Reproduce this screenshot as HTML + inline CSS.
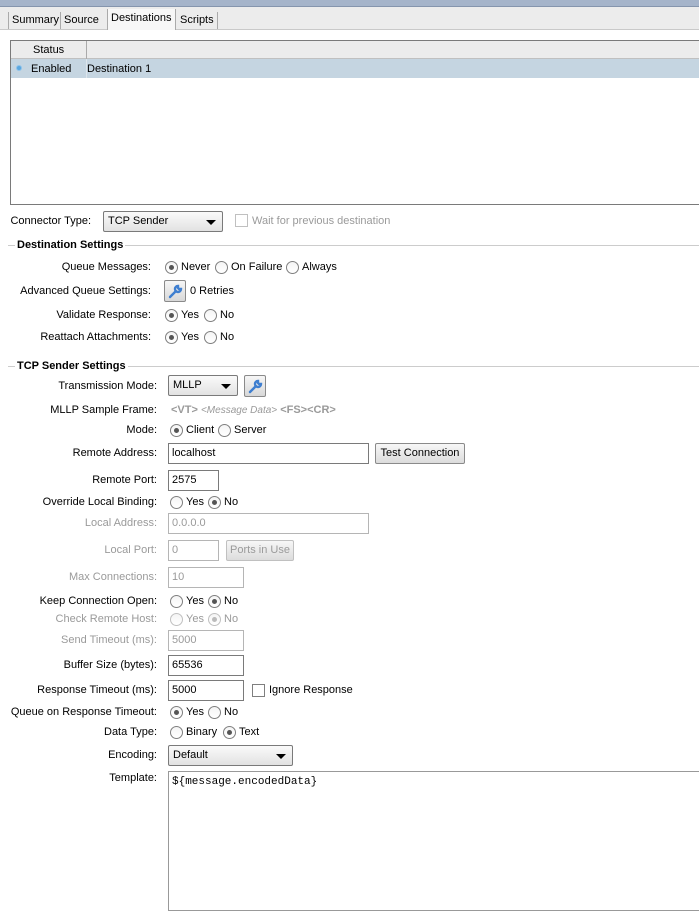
<!DOCTYPE html>
<html><head><meta charset="utf-8"><style>
*{box-sizing:border-box;margin:0;padding:0}
body{width:699px;height:906px;background:#fff;font-family:"Liberation Sans",sans-serif;font-size:11px;color:#000;position:relative;overflow:hidden;line-height:17px}
.a{position:absolute;white-space:nowrap}
.l{position:absolute;text-align:right;white-space:nowrap;line-height:17px}
.g{color:#9a9a9a}
.in{position:absolute;height:21px;border:1px solid #7a7a7a;background:#fff;padding:3px 3px;line-height:13px}
.in.d{border-color:#b5b5b5;color:#9a9a9a}
.r{position:absolute;width:13px;height:13px;border:1px solid #7f7f7f;border-radius:50%;background:linear-gradient(#f4f4f4,#fff)}
.r.on::after{content:"";position:absolute;left:3px;top:3px;width:5px;height:5px;border-radius:50%;background:#555}
.r.dis{border-color:#c0c0c0}.r.dis.on::after{background:#bbb}
.btn{position:absolute;border:1px solid #8a8a8a;border-radius:2px;background:linear-gradient(#f7f7f7,#dcdcdc);text-align:center;line-height:18px}
.sel{position:absolute;height:21px;border:1px solid #7a7a7a;border-radius:2px;background:linear-gradient(#fafafa,#e2e2e2);padding:2px 4px;line-height:15px}
.sel::after{content:"";position:absolute;right:6px;top:8px;border-left:5px solid transparent;border-right:5px solid transparent;border-top:5px solid #000}
.hd{position:absolute;font-weight:bold;white-space:nowrap;background:#fff;padding:0 2px}
.hl{position:absolute;height:1px;background:#ccc}
.wr{position:absolute;width:22px;height:22px;border:1px solid #8a8a8a;border-radius:2px;background:linear-gradient(#f6f6f6,#d8d8d8)}
</style></head><body>
<div class="a" style="left:0;top:0;width:699px;height:6px;background:#a5b4ca"></div>
<div class="a" style="left:0;top:6px;width:699px;height:1px;background:#8595ad"></div>
<div class="a" style="left:0;top:7px;width:699px;height:23px;background:#ececec;border-bottom:1px solid #c9c9c9"></div>
<div class="a" style="left:8px;top:12px;height:17px;padding:0 3px;border-left:1px solid #aaa;line-height:17px">Summary</div>
<div class="a" style="left:60px;top:12px;height:17px;padding:0 3px;border-left:1px solid #aaa;line-height:17px">Source</div>
<div class="a" style="left:107px;top:9px;height:21px;padding:0 3px;border-left:1px solid #aaa;border-right:1px solid #aaa;background:#f7f7f7;line-height:19px">Destinations</div>
<div class="a" style="left:177px;top:12px;height:17px;padding:0 3px;border-right:1px solid #aaa;line-height:17px">Scripts</div>

<div class="a" style="left:10px;top:40px;width:700px;height:165px;border:1px solid #7a7a7a;background:#fff"></div>
<div class="a" style="left:11px;top:41px;width:700px;height:18px;background:#ececec;border-bottom:1px solid #c0c0c0"></div>
<div class="a" style="left:86px;top:41px;width:1px;height:18px;background:#aaa"></div>
<div class="a" style="left:33px;top:42px">Status</div>
<div class="a" style="left:11px;top:59px;width:700px;height:19px;background:#c5d5e1"></div>
<div class="a" style="left:86px;top:59px;width:1px;height:19px;background:#dde5ec"></div>
<div class="a" style="left:16px;top:65px;width:6px;height:6px;border-radius:50%;background:#5aa7e0;border:1px solid #8fc3ea"></div>
<div class="a" style="left:31px;top:61px">Enabled</div>
<div class="a" style="left:87px;top:61px">Destination 1</div>

<div class="l" style="left:0;width:91px;top:213px">Connector Type:</div>
<div class="sel" style="left:103px;top:211px;width:120px">TCP Sender</div>
<div class="a" style="left:235px;top:214px;width:13px;height:13px;border:1px solid #c0c0c0"></div>
<div class="a g" style="left:252px;top:213px">Wait for previous destination</div>

<div class="hl" style="left:8px;top:245px;width:691px"></div>
<div class="hd" style="left:15px;top:237px">Destination Settings</div>
<div class="l" style="left:0;width:151px;top:259px">Queue Messages:</div>
<div class="r on" style="left:165px;top:261px"></div><div class="a" style="left:181px;top:259px">Never</div>
<div class="r" style="left:215px;top:261px"></div><div class="a" style="left:231px;top:259px">On Failure</div>
<div class="r" style="left:286px;top:261px"></div><div class="a" style="left:302px;top:259px">Always</div>
<div class="l" style="left:0;width:151px;top:283px">Advanced Queue Settings:</div>
<div class="wr" style="left:164px;top:280px"></div>
<svg class="a" style="left:168px;top:284px" width="15" height="15" viewBox="0 0 15 15"><path d="M2 13 L8 7 M10 2 a3 3 0 1 0 3 3 l-2 0 l-1-1z" stroke="#3f7fd0" stroke-width="2.4" fill="none" stroke-linecap="round"/></svg>
<div class="a" style="left:190px;top:283px">0 Retries</div>
<div class="l" style="left:0;width:151px;top:307px">Validate Response:</div>
<div class="r on" style="left:165px;top:309px"></div><div class="a" style="left:181px;top:307px">Yes</div>
<div class="r" style="left:204px;top:309px"></div><div class="a" style="left:220px;top:307px">No</div>
<div class="l" style="left:0;width:151px;top:329px">Reattach Attachments:</div>
<div class="r on" style="left:165px;top:331px"></div><div class="a" style="left:181px;top:329px">Yes</div>
<div class="r" style="left:204px;top:331px"></div><div class="a" style="left:220px;top:329px">No</div>

<div class="hl" style="left:8px;top:366px;width:691px"></div>
<div class="hd" style="left:15px;top:358px">TCP Sender Settings</div>
<div class="l" style="left:0;width:157px;top:378px">Transmission Mode:</div>
<div class="sel" style="left:168px;top:375px;width:70px">MLLP</div>
<div class="wr" style="left:244px;top:375px"></div>
<svg class="a" style="left:248px;top:379px" width="15" height="15" viewBox="0 0 15 15"><path d="M2 13 L8 7 M10 2 a3 3 0 1 0 3 3 l-2 0 l-1-1z" stroke="#3f7fd0" stroke-width="2.4" fill="none" stroke-linecap="round"/></svg>
<div class="l" style="left:0;width:157px;top:402px">MLLP Sample Frame:</div>
<div class="a g" style="left:171px;top:402px"><b>&lt;VT&gt;</b> <i style="font-size:10px">&lt;Message Data&gt;</i> <b>&lt;FS&gt;&lt;CR&gt;</b></div>
<div class="l" style="left:0;width:157px;top:422px">Mode:</div>
<div class="r on" style="left:170px;top:424px"></div><div class="a" style="left:186px;top:422px">Client</div>
<div class="r" style="left:218px;top:424px"></div><div class="a" style="left:234px;top:422px">Server</div>
<div class="l" style="left:0;width:157px;top:445px">Remote Address:</div>
<div class="in" style="left:168px;top:443px;width:201px">localhost</div>
<div class="btn" style="left:375px;top:443px;width:90px;height:21px">Test Connection</div>
<div class="l" style="left:0;width:157px;top:472px">Remote Port:</div>
<div class="in" style="left:168px;top:470px;width:51px">2575</div>
<div class="l" style="left:0;width:157px;top:494px">Override Local Binding:</div>
<div class="r" style="left:170px;top:496px"></div><div class="a" style="left:186px;top:494px">Yes</div>
<div class="r on" style="left:208px;top:496px"></div><div class="a" style="left:224px;top:494px">No</div>
<div class="l g" style="left:0;width:157px;top:515px">Local Address:</div>
<div class="in d" style="left:168px;top:513px;width:201px">0.0.0.0</div>
<div class="l g" style="left:0;width:157px;top:542px">Local Port:</div>
<div class="in d" style="left:168px;top:540px;width:51px">0</div>
<div class="btn g" style="left:226px;top:540px;width:68px;height:21px;border-color:#c0c0c0">Ports in Use</div>
<div class="l g" style="left:0;width:157px;top:569px">Max Connections:</div>
<div class="in d" style="left:168px;top:567px;width:76px">10</div>
<div class="l" style="left:0;width:157px;top:593px">Keep Connection Open:</div>
<div class="r" style="left:170px;top:595px"></div><div class="a" style="left:186px;top:593px">Yes</div>
<div class="r on" style="left:208px;top:595px"></div><div class="a" style="left:224px;top:593px">No</div>
<div class="l g" style="left:0;width:157px;top:611px">Check Remote Host:</div>
<div class="r dis" style="left:170px;top:613px"></div><div class="a g" style="left:186px;top:611px">Yes</div>
<div class="r dis on" style="left:208px;top:613px"></div><div class="a g" style="left:224px;top:611px">No</div>
<div class="l g" style="left:0;width:157px;top:632px">Send Timeout (ms):</div>
<div class="in d" style="left:168px;top:630px;width:76px">5000</div>
<div class="l" style="left:0;width:157px;top:657px">Buffer Size (bytes):</div>
<div class="in" style="left:168px;top:655px;width:76px">65536</div>
<div class="l" style="left:0;width:157px;top:682px">Response Timeout (ms):</div>
<div class="in" style="left:168px;top:680px;width:76px">5000</div>
<div class="a" style="left:252px;top:684px;width:13px;height:13px;border:1px solid #7f7f7f"></div>
<div class="a" style="left:269px;top:682px">Ignore Response</div>
<div class="l" style="left:0;width:157px;top:704px">Queue on Response Timeout:</div>
<div class="r on" style="left:170px;top:706px"></div><div class="a" style="left:186px;top:704px">Yes</div>
<div class="r" style="left:208px;top:706px"></div><div class="a" style="left:224px;top:704px">No</div>
<div class="l" style="left:0;width:157px;top:724px">Data Type:</div>
<div class="r" style="left:170px;top:726px"></div><div class="a" style="left:186px;top:724px">Binary</div>
<div class="r on" style="left:223px;top:726px"></div><div class="a" style="left:239px;top:724px">Text</div>
<div class="l" style="left:0;width:157px;top:747px">Encoding:</div>
<div class="sel" style="left:168px;top:745px;width:125px">Default</div>
<div class="l" style="left:0;width:157px;top:770px">Template:</div>
<div class="a" style="left:168px;top:771px;width:540px;height:140px;border:1px solid #999;background:#fff"></div>
<div class="a" style="left:172px;top:774px;font-family:'Liberation Mono',monospace;font-size:11px">${message.encodedData}</div>
</body></html>
